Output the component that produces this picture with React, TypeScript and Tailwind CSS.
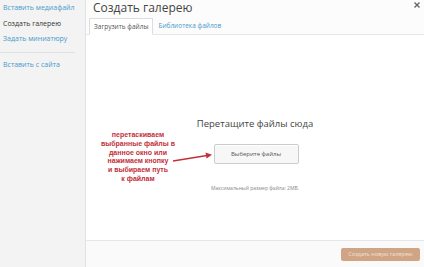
const links = [
  { label: "Вставить медиафайл", active: false },
  { label: "Создать галерею", active: true },
  { label: "Задать миниатюру", active: false },
];

const App = () => {
  return (
    <div className="flex w-[424px] h-[267px] overflow-hidden bg-white font-['Open_Sans',sans-serif] relative">
      <aside className="w-[86px] shrink-0 bg-[#f3f3f3] border-r border-[#e2e2e2] pt-[3px]">
        {links.map((l) => (
          <div
            key={l.label}
            className={`pl-[3px] h-[15.5px] leading-[9px] text-[7px] ${l.active ? "text-[#333333]" : "text-[#4a9acb]"}`}
          >
            {l.label}
          </div>
        ))}
        <div className="mt-[2px] w-[75px] border-t border-[#e0e0e0]" />
        <div className="pl-[3px] pt-[7px] text-[7px] leading-[9px] text-[#4a9acb]">Вставить с сайта</div>
      </aside>

      <main className="flex-1 flex flex-col">
        <div className="bg-[#fcfcfc] border-b border-[#e6e6e6] h-[35px] flex flex-col">
          <div className="flex items-start justify-between h-[18px]">
            <h1 className="pl-[7px] pt-[1px] text-[12px] leading-[14px] text-[#444444]">Создать галерею</h1>
            <svg width="6" height="6" viewBox="0 0 6 6" className="mt-[2px] mr-[4px]">
              <path d="M0.5 0.5 L5.5 5.5 M5.5 0.5 L0.5 5.5" stroke="#666" strokeWidth="1.4" />
            </svg>
          </div>
          <div className="flex items-end pl-[3px] gap-[5px] h-[17px]">
            <div className="h-[17px] -mb-px px-[4px] bg-white border border-[#dddddd] border-b-white flex items-center text-[6.5px] text-[#555555]">
              Загрузить файлы
            </div>
            <div className="h-[17px] flex items-center text-[6.5px] text-[#4a9acb]">Библиотека файлов</div>
          </div>
        </div>

        <div className="flex-1 flex flex-col items-center pt-[83px]">
          <div className="text-[9.5px] leading-[12px] text-[#444444]">Перетащите файлы сюда</div>
          <button className="mt-[14px] ml-[2px] w-[85px] h-[20px] bg-[#f7f7f7] border border-[#cccccc] rounded-[2px] text-[6px] text-[#555555] shadow-[inset_0_1px_0_#fff]">
            Выберите файлы
          </button>
          <div className="mt-[20px] text-[5px] leading-[8px] text-[#888888]">Максимальный размер файла: 2MB.</div>
        </div>

        <div className="h-[27px] border-t border-[#e6e6e6] bg-[#fafafa] flex items-center justify-end pr-[4px]">
          <button className="w-[79px] h-[13px] bg-[#cfa585] rounded-[2px] text-[5.5px] text-[#f3e2d4]">
            Создать новую галерею
          </button>
        </div>
      </main>

      <div className="absolute left-[98px] top-[131px] w-[80px] text-center font-['Liberation_Sans',sans-serif] font-bold text-[7px] leading-[8.8px] text-[#c4303a]">
        перетаскиваем
        <br />
        выбранные файлы в
        <br />
        данное окно или
        <br />
        нажимаем кнопку
        <br />
        и выбираем путь
        <br />
        к файлам
      </div>
      <svg className="absolute left-0 top-0" width="424" height="267">
        <path d="M173 161 L207 155.5" stroke="#c4303a" strokeWidth="1.3" />
        <path d="M212 154.7 L205.5 152.5 L206.5 158.5 Z" fill="#c4303a" />
      </svg>
    </div>
  );
};

export default App;
